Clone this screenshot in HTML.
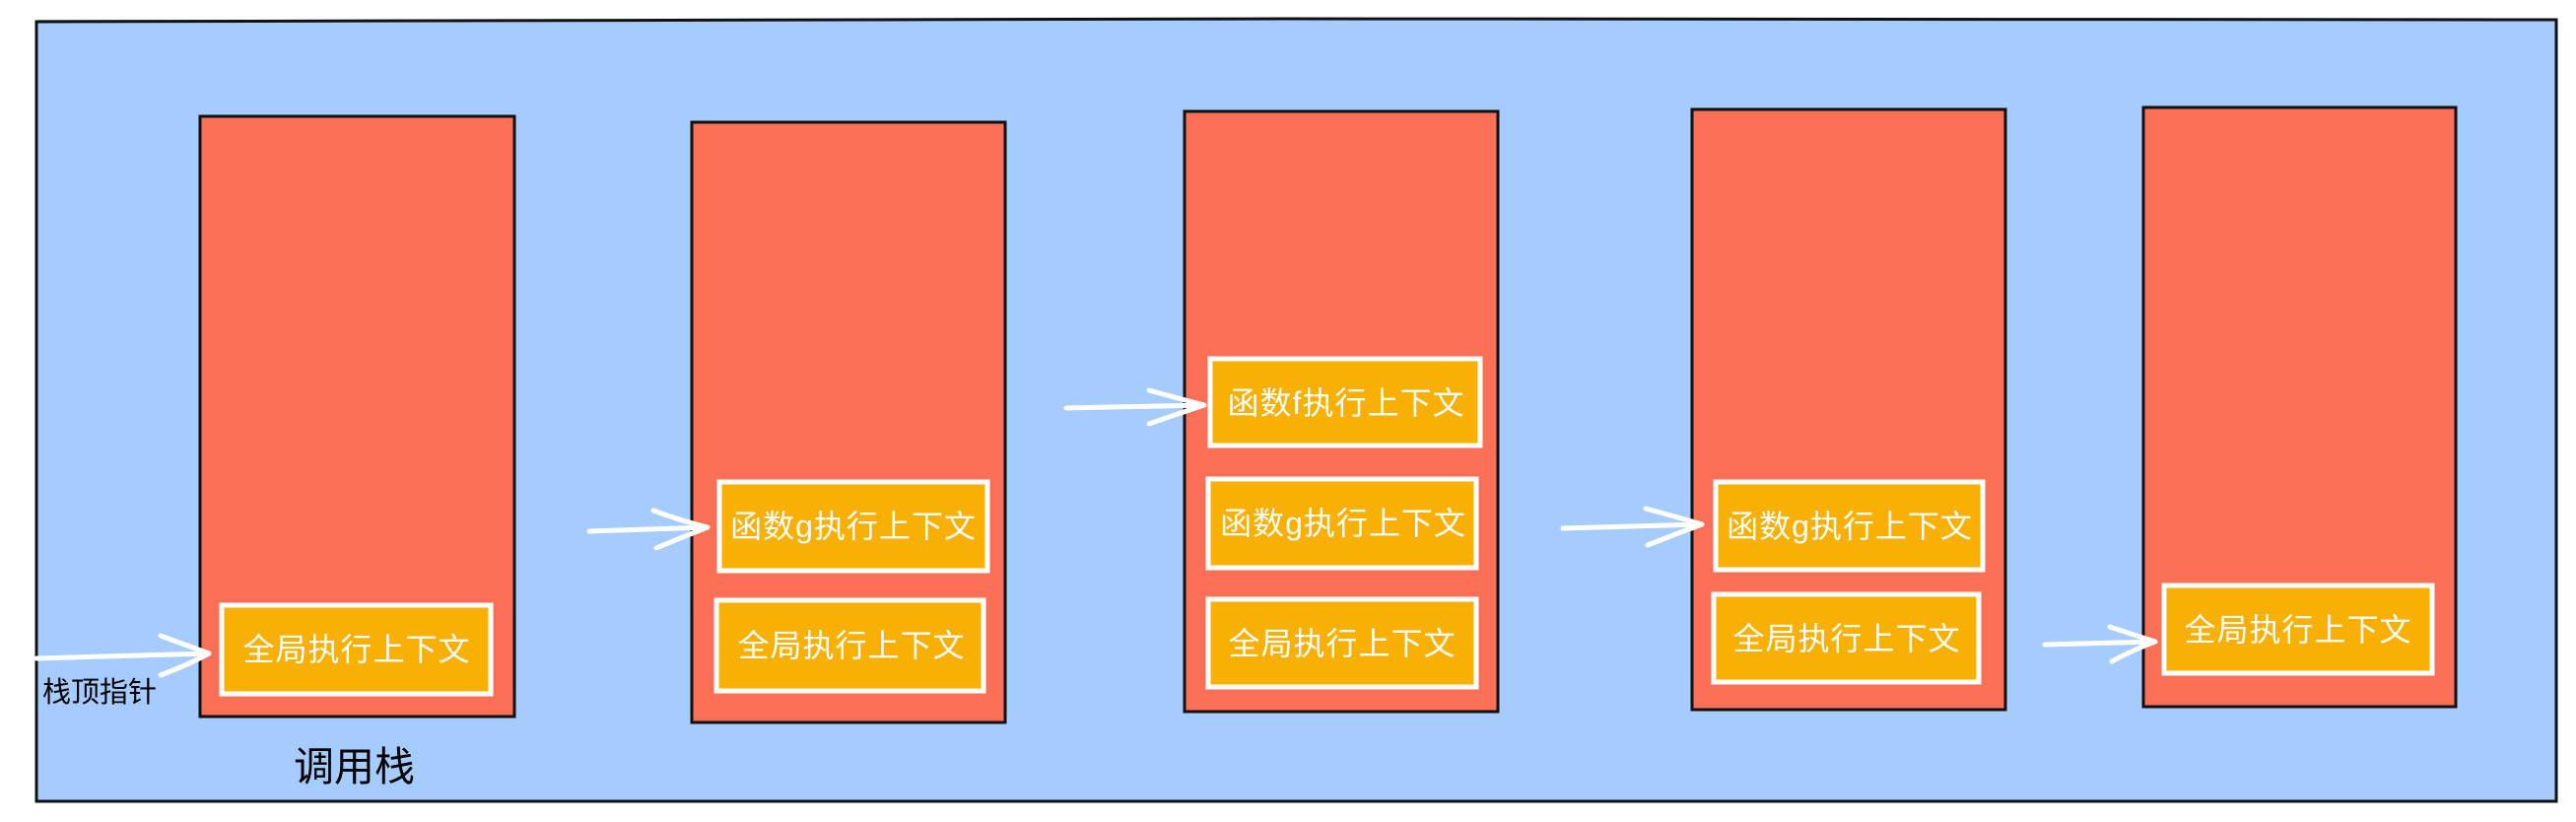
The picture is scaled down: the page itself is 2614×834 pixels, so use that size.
<!DOCTYPE html>
<html><head><meta charset="utf-8"><style>
html,body{margin:0;padding:0;background:#fff;}
svg{display:block;}
text{font-family:"Liberation Sans","Noto Sans CJK SC",sans-serif;}
</style></head><body>
<svg width="2614" height="834" viewBox="0 0 2614 834" xmlns="http://www.w3.org/2000/svg">
<rect x="37" y="20" width="2557" height="793" fill="#a6cbfe"/>
<path d="M37 22 L1300 19 L2594 20 L2594 813 L37 813 Z" fill="none" stroke="#111" stroke-width="3"/>
<g fill="#f97056" stroke="#111" stroke-width="3">
<rect x="203" y="118" width="319" height="609"/>
<rect x="702" y="124" width="318" height="609"/>
<rect x="1202" y="113" width="318" height="609"/>
<rect x="1717" y="111" width="318" height="609"/>
<rect x="2175" y="109" width="317" height="608"/>
</g>
<g fill="#f9b005" stroke="#fff" stroke-width="5">
<rect x="225" y="614" width="273" height="90"/>
<rect x="730" y="489" width="272" height="90"/>
<rect x="727" y="609" width="271" height="92"/>
<rect x="1228" y="364" width="274" height="88"/>
<rect x="1226" y="486" width="272" height="90"/>
<rect x="1226" y="608" width="272" height="89"/>
<rect x="1741" y="489" width="271" height="89"/>
<rect x="1739" y="603" width="269" height="89"/>
<rect x="2196" y="594" width="272" height="89"/>
</g>
<g fill="#fff" font-size="32" text-anchor="middle" letter-spacing="1">
<text x="362" y="670">全局执行上下文</text>
<text x="866" y="545">函数g执行上下文</text>
<text x="864" y="666">全局执行上下文</text>
<text x="1366" y="420">函数f执行上下文</text>
<text x="1363" y="542">函数g执行上下文</text>
<text x="1362" y="664">全局执行上下文</text>
<text x="1877" y="545">函数g执行上下文</text>
<text x="1874" y="659">全局执行上下文</text>
<text x="2332" y="650">全局执行上下文</text>
</g>
<g fill="none" stroke="#fff" stroke-width="5" stroke-linecap="round" stroke-linejoin="round">
<path d="M37 668 L212 663 M163 645 Q190 655 212 663 Q190 675 163 685"/>
<path d="M598 539 L718 535 M663 518 Q690 528 718 535 Q692 545 666 556"/>
<path d="M1082 414 L1222 411 M1166 396 Q1195 404 1222 411 Q1195 420 1166 430"/>
<path d="M1586 536 L1727 532 M1670 516 Q1700 524 1727 532 Q1700 542 1672 553"/>
<path d="M2075 654 L2187 651 M2141 636 Q2165 644 2187 651 Q2163 660 2143 671"/>
</g>
<text x="43" y="712" font-size="29" fill="#000">栈顶指针</text>
<text x="298" y="792" font-size="41" fill="#000">调用栈</text>
</svg>
</body></html>
